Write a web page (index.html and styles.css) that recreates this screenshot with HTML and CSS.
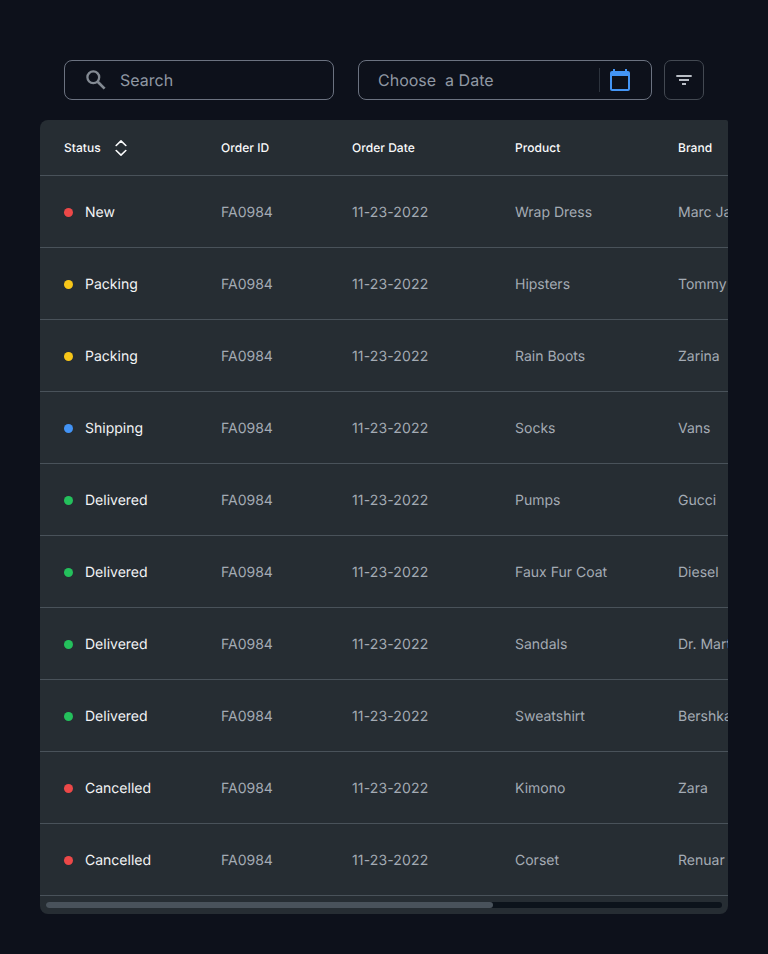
FILE: index.html
```
<!DOCTYPE html>
<html lang="en">
<head>
<meta charset="utf-8">
<title>Orders</title>
<link rel="stylesheet" href="styles.css">
</head>
<body>
<main class="page">
  <div class="toolbar">
    <div class="field search">
      <svg class="search-icon" width="20" height="20" viewBox="0 0 20 20" fill="none" stroke="currentColor"><circle cx="7.3" cy="7.3" r="5.9" stroke-width="2.3"/><path d="M11.7 11.7L18.6 18.6" stroke-width="2.7"/></svg>
      <span>Search</span>
    </div>
    <div class="field date">
      <span class="date-label">Choose  a Date</span>
      <span class="date-button">
        <svg width="20" height="22" viewBox="0 0 20 22"><path fill="currentColor" fill-rule="evenodd" d="M3 0h2v2h10V0h2v2h1a2 2 0 0 1 2 2v16a2 2 0 0 1-2 2H2a2 2 0 0 1-2-2V4a2 2 0 0 1 2-2h1zM2 7v13h16V7z"/></svg>
      </span>
    </div>
    <div class="filter">
      <svg width="16" height="10" viewBox="0 0 16 10" fill="none" stroke="currentColor" stroke-width="1.8"><path d="M.3 1H15.7M3 5H13M6 9H10"/></svg>
    </div>
  </div>
  <section class="card">
    <div class="row head">
      <span class="sortable">Status <svg width="12" height="16" viewBox="0 0 12 16" fill="none" stroke="currentColor" stroke-width="1.6" stroke-linecap="round" stroke-linejoin="round"><path d="M1.2 5.5L6 .9L10.8 5.5M1.2 10.5L6 15.1L10.8 10.5"/></svg></span>
      <span>Order ID</span><span>Order Date</span><span>Product</span><span>Brand</span>
    </div>
    <div class="row"><span class="status red">New</span><span>FA0984</span><span class="day">11-23-2022</span><span>Wrap Dress</span><span>Marc Jacobs</span></div>
    <div class="row"><span class="status yellow">Packing</span><span>FA0984</span><span class="day">11-23-2022</span><span>Hipsters</span><span>Tommy Hilfiger</span></div>
    <div class="row"><span class="status yellow">Packing</span><span>FA0984</span><span class="day">11-23-2022</span><span>Rain Boots</span><span>Zarina</span></div>
    <div class="row"><span class="status blue">Shipping</span><span>FA0984</span><span class="day">11-23-2022</span><span>Socks</span><span>Vans</span></div>
    <div class="row"><span class="status green">Delivered</span><span>FA0984</span><span class="day">11-23-2022</span><span>Pumps</span><span>Gucci</span></div>
    <div class="row"><span class="status green">Delivered</span><span>FA0984</span><span class="day">11-23-2022</span><span>Faux Fur Coat</span><span>Diesel</span></div>
    <div class="row"><span class="status green">Delivered</span><span>FA0984</span><span class="day">11-23-2022</span><span>Sandals</span><span>Dr. Martens</span></div>
    <div class="row"><span class="status green">Delivered</span><span>FA0984</span><span class="day">11-23-2022</span><span>Sweatshirt</span><span>Bershka</span></div>
    <div class="row"><span class="status red">Cancelled</span><span>FA0984</span><span class="day">11-23-2022</span><span>Kimono</span><span>Zara</span></div>
    <div class="row"><span class="status red">Cancelled</span><span>FA0984</span><span class="day">11-23-2022</span><span>Corset</span><span>Renuar</span></div>
    <div class="track"><div class="thumb"></div></div>
  </section>
</main>
</body>
</html>
```
FILE: styles.css
```
* { box-sizing: border-box; }
body {
  margin: 0;
  background: #0d111b;
  font-family: Inter, "Liberation Sans", sans-serif;
  text-rendering: geometricPrecision;
}
svg { display: block; flex: none; }
.page { height: 954px; padding: 60px 40px 40px; }
.toolbar { display: flex; height: 40px; margin: 0 24px 20px; }
.field {
  display: flex;
  align-items: center;
  border: 1px solid #6b7280;
  border-radius: 8px;
  color: #9098a3;
  font-size: 16px;
  white-space: pre;
}
.search { width: 270px; margin-right: 24px; padding-left: 21px; gap: 14px; }
.search-icon { color: #838a93; }
.date { width: 294px; margin-right: 12px; padding: 0 21px 0 19px; justify-content: space-between; }
.date-button {
  display: flex;
  align-items: center;
  height: 24px;
  padding-left: 10px;
  border-left: 1px solid #2c333d;
  color: #4495f5;
}
.filter {
  display: flex;
  align-items: center;
  justify-content: center;
  width: 40px;
  border: 1px solid #434952;
  border-radius: 7px;
  color: #b9bec5;
}
.card {
  height: 794px;
  overflow: hidden;
  border-radius: 8px 2px 8px 8px;
  background: #262d33;
}
.row {
  display: grid;
  grid-template-columns: 157px 131px 163px 163px 160px;
  align-items: center;
  height: 72px;
  padding: 1px 0 0 24px;
  border-bottom: 1px solid #49525a;
  color: #a4abb4;
  font-size: 14px;
  white-space: nowrap;
}
.day { letter-spacing: .14px; }
.head { height: 56px; padding-top: 0; color: #f9fafb; font-size: 12px; font-weight: 500; letter-spacing: .04px; }
.sortable { display: flex; align-items: center; gap: 14px; }
.status { display: flex; align-items: center; gap: 12px; color: #f3f4f6; }
.status::before { content: ""; width: 9px; height: 9px; border-radius: 50%; background: currentColor; }
.red::before { background: #ec4848; }
.yellow::before { background: #f7c619; }
.blue::before { background: #4293f5; }
.green::before { background: #24c05c; }
.track { height: 6px; margin: 6px 6px 0; border-radius: 3px; background: #0c131b; }
.thumb { width: 447px; height: 6px; border-radius: 3px; background: #49525b; }
```
